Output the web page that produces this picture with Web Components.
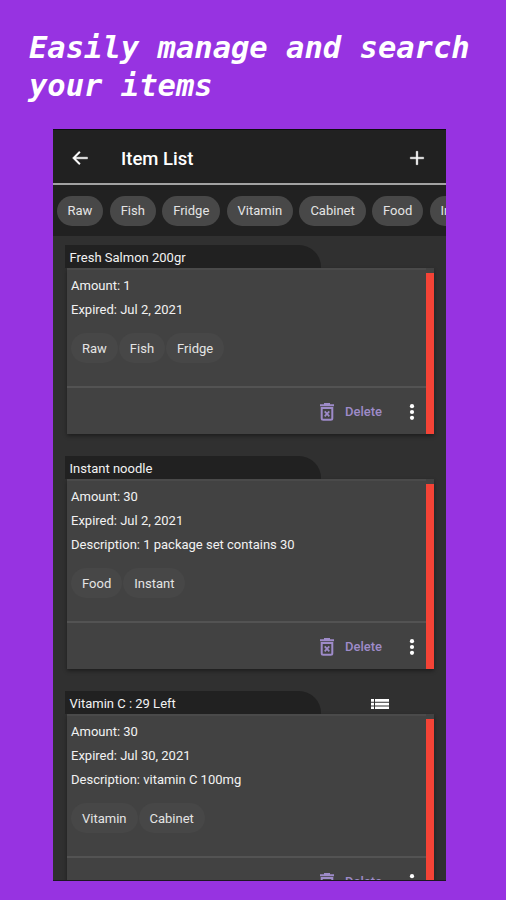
<!DOCTYPE html>
<html lang="en">
<head>
<meta charset="utf-8">
<title>Item List</title>
<style>
  html, body {
    margin: 0;
    height: 900px;
    overflow: hidden;
    background: #9733e1;
  }
</style>
</head>
<body>
<item-promo></item-promo>

<script>
(() => {
  const define = (name, html, setup) => {
    const template = document.createElement('template');
    template.innerHTML = html;

    customElements.define(name, class extends HTMLElement {
      constructor() {
        super();
        this.attachShadow({ mode: 'open' });
        this.shadowRoot.appendChild(template.content.cloneNode(true));
      }

      connectedCallback() {
        if (setup) setup(this, this.shadowRoot);
      }
    });
  };

  // Rounded tag, also used as a filter
  define('tag-chip', `
    <style>
      :host {
        display: flex;
        flex: none;
        align-items: center;
        justify-content: center;
        box-sizing: border-box;
        height: 30px;
        padding: 0 11px;
        border-radius: 15px;
        background: var(--chip-color, #484848);
        color: #e4e4e4;
        font-size: 13px;
        white-space: nowrap;
      }
    </style>
    <slot></slot>
  `);

  define('app-bar', `
    <style>
      :host {
        display: flex;
        align-items: center;
        box-sizing: border-box;
        height: 56px;
        padding: 3px 19px 0 17px;
        border-top: 1px solid #0d0d12;
        border-bottom: 2px solid #a2a2a2;
        background: #212121;
        color: #fff;
      }

      .title {
        flex: 1;
        margin-left: 31px;
        padding-top: 2px;
        font-size: 18.5px;
        font-weight: 500;
        line-height: 24px;
      }

      svg {
        display: block;
        fill: currentColor;
        stroke: currentColor;
        stroke-width: .5px;
      }
    </style>
    <svg width="20" height="20" viewBox="0 0 24 24"><path d="M21 11H6.8l5.6-5.6L11 4l-8 8 8 8 1.4-1.4L6.8 13H21z"/></svg>
    <div class="title"><slot></slot></div>
    <svg width="20" height="20" viewBox="0 0 24 24"><path d="M20 13h-7v7h-2v-7H4v-2h7V4h2v7h7z"/></svg>
  `);

  define('filter-bar', `
    <style>
      :host {
        display: flex;
        align-items: center;
        gap: 6.3px;
        box-sizing: border-box;
        height: 51px;
        padding-left: 3.5px;
        overflow: hidden;
        background: #212121;
      }
    </style>
    <slot></slot>
  `);

  define('item-card', `
    <style>
      :host {
        display: block;
        margin-bottom: 22px;
        color: #f2f2f2;
        font-size: 13px;
        --chip-color: #474747;
      }

      .top {
        display: flex;
        align-items: center;
        height: 23px;
      }

      .tab {
        box-sizing: border-box;
        width: 256px;
        height: 23px;
        padding-left: 4.5px;
        border-top-right-radius: 22px;
        background: #212121;
        line-height: 26px;
      }

      .list {
        display: none;
        margin: 2px 0 0 50px;
      }

      :host([divided]) .list {
        display: block;
      }

      .card {
        display: flex;
        margin: 0 1px 0 1.5px;
        background: #424242;
        box-shadow: 0 2px 4px rgba(0, 0, 0, .4);
      }

      .main {
        flex: 1;
        border-top: 2px solid #4a4a4a;
      }

      .strip {
        width: 8px;
        margin-top: 5px;
        background: #f44336;
      }

      .body {
        padding: 4px 4px 23px 4.5px;
      }

      .line {
        height: 24px;
        line-height: 24px;
      }

      .tags {
        display: flex;
        gap: 1px;
        margin-top: 11px;
      }

      .actions {
        display: flex;
        align-items: center;
        justify-content: flex-end;
        height: 45px;
        padding: 1px 9px 0 0;
        border-top: 2px solid #535353;
        color: #9e8bc9;
        font-weight: 500;
        box-sizing: content-box;
      }

      .trash {
        margin-right: 10px;
      }

      .more {
        margin-left: 25px;
      }

      svg {
        display: block;
      }
    </style>
    <div class="top">
      <div class="tab"></div>
      <svg class="list" width="18" height="12" viewBox="0 0 18 12" fill="#fff"><path d="M0 1h3v2.7H0zM4 1h14v2.7H4zM0 4.7h3v2.7H0zM4 4.7h14v2.7H4zM0 8.4h3v2.7H0zM4 8.4h14v2.7H4z"/></svg>
    </div>
    <div class="card">
      <div class="main">
        <div class="body">
          <div class="lines"></div>
          <div class="tags"></div>
        </div>
        <div class="actions">
          <svg class="trash" width="16" height="18" viewBox="0 0 16 18" fill="none" stroke="currentColor">
            <path d="M1 2.2h14M5 1h6" stroke-width="2"/>
            <path d="M2.7 5h10.6v10.3q0 1.5-1.5 1.5H4.2q-1.5 0-1.5-1.5z" stroke-width="2"/>
            <path d="M5.7 8.4l4.6 5M10.3 8.4l-4.6 5" stroke-width="1.7"/>
          </svg>
          <span>Delete</span>
          <svg class="more" width="10" height="18" viewBox="0 0 10 18" fill="#fff"><circle cx="5" cy="3.2" r="2.1"/><circle cx="5" cy="9" r="2.1"/><circle cx="5" cy="14.8" r="2.1"/></svg>
        </div>
      </div>
      <div class="strip"></div>
    </div>
  `, (host, root) => {
    root.querySelector('.tab').textContent = host.getAttribute('name');
    host.getAttribute('lines').split('|').forEach((text) => {
      const line = document.createElement('div');
      line.className = 'line';
      line.textContent = text;
      root.querySelector('.lines').appendChild(line);
    });
    host.getAttribute('tags').split('|').forEach((text) => {
      const chip = document.createElement('tag-chip');
      chip.textContent = text;
      root.querySelector('.tags').appendChild(chip);
    });
  });

  define('phone-screen', `
    <style>
      :host {
        display: block;
        box-sizing: border-box;
        width: 393px;
        height: 752px;
        margin: 0 0 0 53px;
        overflow: hidden;
        background: #303030;
        border-bottom: 1px solid #1b1722;
        font-family: Roboto, "Liberation Sans", sans-serif;
      }

      .items {
        padding: 9px 11px 0 12px;
      }
    </style>
    <app-bar>Item List</app-bar>
    <filter-bar>
      <tag-chip>Raw</tag-chip>
      <tag-chip>Fish</tag-chip>
      <tag-chip>Fridge</tag-chip>
      <tag-chip>Vitamin</tag-chip>
      <tag-chip>Cabinet</tag-chip>
      <tag-chip>Food</tag-chip>
      <tag-chip>Instant</tag-chip>
    </filter-bar>
    <div class="items">
      <item-card name="Fresh Salmon 200gr" lines="Amount: 1|Expired: Jul 2, 2021" tags="Raw|Fish|Fridge"></item-card>
      <item-card name="Instant noodle" lines="Amount: 30|Expired: Jul 2, 2021|Description: 1 package set contains 30" tags="Food|Instant"></item-card>
      <item-card divided name="Vitamin C : 29 Left" lines="Amount: 30|Expired: Jul 30, 2021|Description: vitamin C 100mg" tags="Vitamin|Cabinet"></item-card>
    </div>
  `);

  define('item-promo', `
    <style>
      :host {
        display: block;
      }

      h1 {
        box-sizing: border-box;
        height: 129px;
        margin: 0;
        padding: 29px 0 0 29px;
        color: #fff;
        font: italic bold 30.5px/38px "DejaVu Sans Mono", monospace;
      }
    </style>
    <h1>Easily manage and search<br>your items</h1>
    <phone-screen></phone-screen>
  `);
})();
</script>
</body>
</html>
